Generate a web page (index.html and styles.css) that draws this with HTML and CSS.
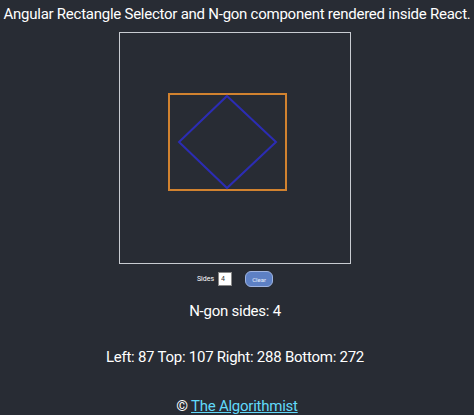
FILE: index.html
```html
<!DOCTYPE html>
<html>
<head>
<meta charset="utf-8">
<link rel="stylesheet" href="styles.css">
</head>
<body>
<div class="app">
  <p class="title">Angular Rectangle Selector and N-gon component rendered inside React.</p>
  <div class="stage">
    <svg class="canvas" width="230" height="230" viewBox="0 0 230 230">
      <rect x="49" y="61" width="117" height="96" fill="none" stroke="#d1822f" stroke-width="2"/>
      <polygon points="107,63 156,109 107,155 59,109" fill="none" stroke="#2c2cb4" stroke-width="2"/>
    </svg>
  </div>
  <div class="controls">
    <label class="sides-label">Sides</label>
    <input class="sides-input" type="text" value="4">
    <button class="clear-btn">Clear</button>
  </div>
  <p class="info sides">N-gon sides: 4</p>
  <p class="info bounds">Left: 87 Top: 107 Right: 288 Bottom: 272</p>
  <p class="footer">© <a href="#">The Algorithmist</a></p>
</div>
</body>
</html>
```

FILE: styles.css
```css
html, body {
  margin: 0;
  padding: 0;
  background: #282c34;
}
.app {
  width: 474px;
  height: 415px;
  display: flex;
  flex-direction: column;
  align-items: center;
  color: #ffffff;
  font-family: Roboto, "Liberation Sans", Arial, sans-serif;
  text-align: center;
}
.title {
  margin: 4px 0 0 0;
  font-size: 15px;
  letter-spacing: -0.25px;
  line-height: 20px;
  white-space: nowrap;
}
.stage {
  margin-top: 8px;
  margin-right: 4px;
  width: 230px;
  height: 230px;
  border: 1px solid #c9ccd2;
}
.canvas {
  display: block;
}
.controls {
  margin-top: 7px;
  margin-right: 4px;
  height: 17px;
  display: flex;
  align-items: center;
  gap: 4px;
}
.sides-label {
  font-size: 7px;
  color: #ffffff;
}
.sides-input {
  width: 14px;
  height: 14px;
  box-sizing: border-box;
  border: 1px solid #888;
  background: #ffffff;
  font-size: 7px;
  padding: 0 0 0 2px;
  margin: 0;
  color: #333;
  font-family: Roboto, "Liberation Sans", Arial, sans-serif;
}
.clear-btn {
  margin-left: 9px;
  width: 28px;
  height: 16px;
  border-radius: 6px;
  border: 1px solid #9fb4e0;
  background: #5d80c4;
  color: #e8eefb;
  font-size: 6px;
  padding: 0;
  font-family: Roboto, "Liberation Sans", Arial, sans-serif;
}
.info {
  margin: 0;
  font-size: 15px;
  letter-spacing: -0.25px;
  line-height: 20px;
}
.sides {
  margin-top: 14px;
  margin-right: 4px;
}
.bounds {
  margin-top: 26px;
  margin-right: 4px;
}
.footer {
  margin: 29px 0 0 0;
  font-size: 15px;
  letter-spacing: -0.25px;
  line-height: 20px;
}
.footer a {
  color: #61dafb;
  text-decoration: underline;
}
```
